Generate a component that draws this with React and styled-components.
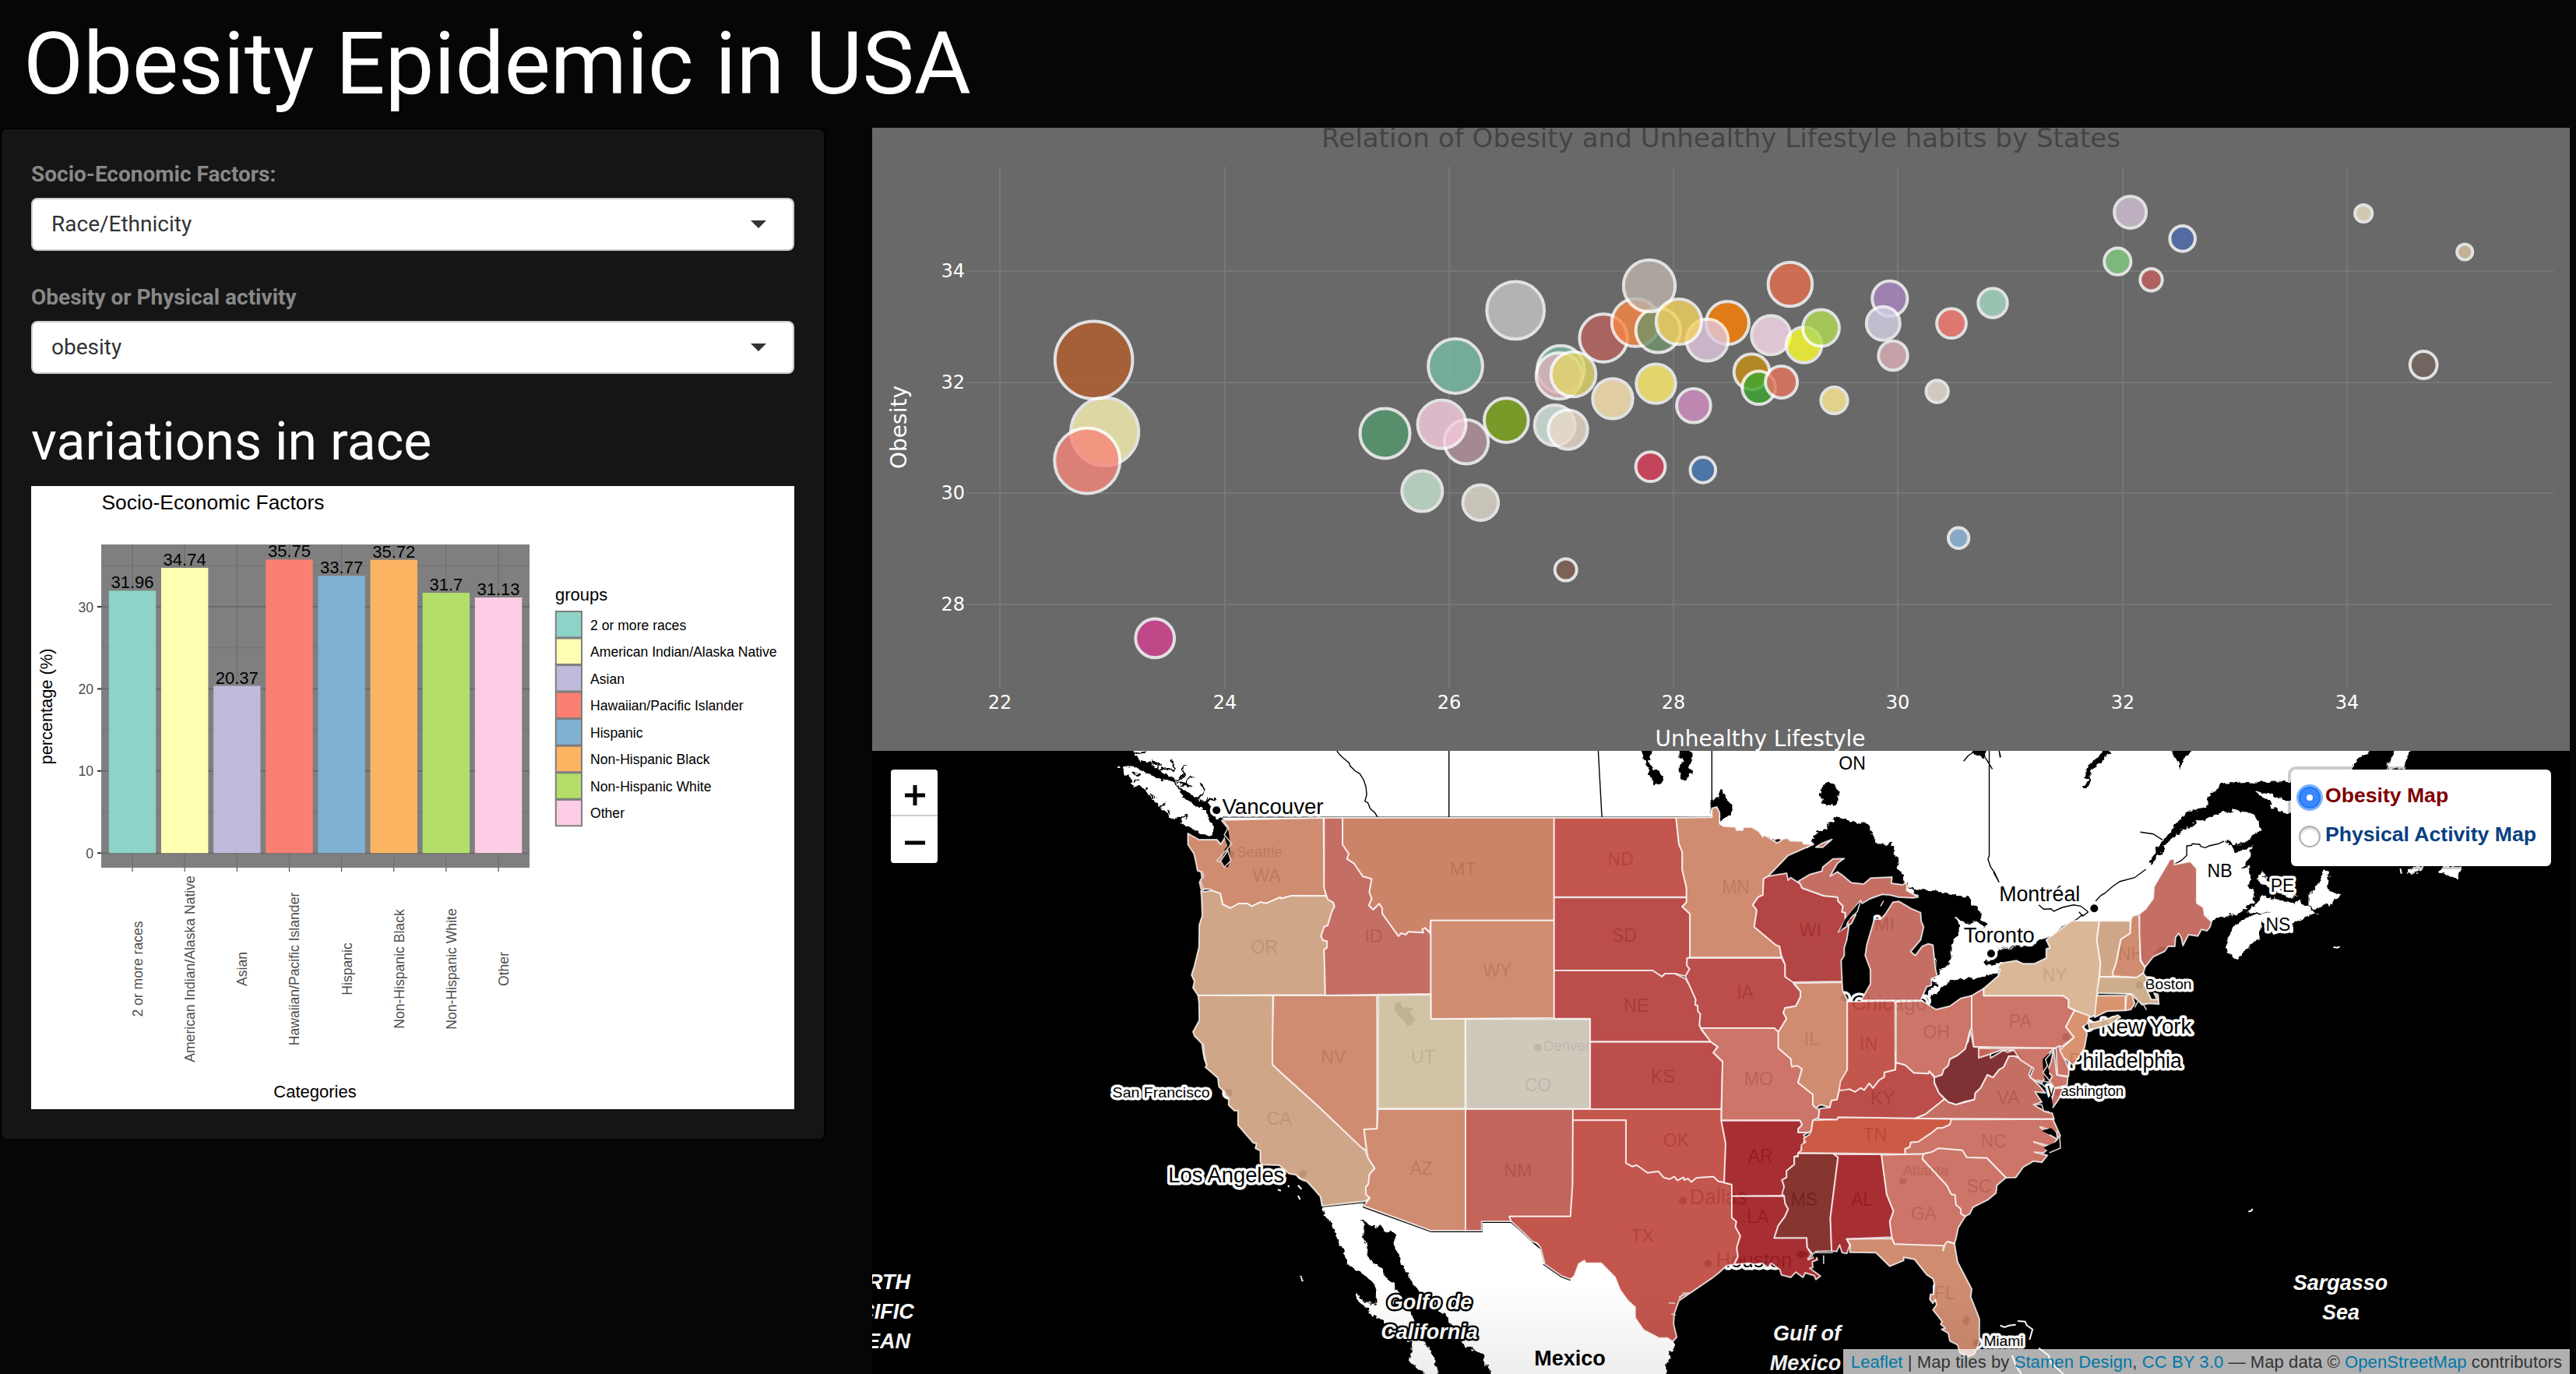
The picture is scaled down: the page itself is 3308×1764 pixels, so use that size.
import React from "react";
import styled, { createGlobalStyle } from "styled-components";

const GlobalStyle = createGlobalStyle`
  html, body { margin: 0; padding: 0; background: #060606; }
  body { font-family: Roboto, "Liberation Sans", sans-serif; font-size: 28px; line-height: 40px; color: #888; }
  * { box-sizing: border-box; }
`;

/* ---------- page shell ---------- */

const Page = styled.div`
  width: 3308px;
  height: 1764px;
  overflow: hidden;
  background: #060606;
`;

const PageHeader = styled.header`
  height: 164px;
  padding: 20px 30px 0;
`;

const PageTitle = styled.h1`
  margin: 0;
  font-size: 112px;
  font-weight: 400;
  line-height: 123px;
  letter-spacing: -0.1px;
  color: #fff;
`;

const Columns = styled.div`
  display: grid;
  grid-template-columns: 1060px 2180px;
  column-gap: 60px;
  align-items: start;
`;

const Well = styled.aside`
  height: 1300px;
  padding: 38px;
  border: 2px solid #020202;
  border-radius: 8px;
  background: #151515;
`;

const Field = styled.div`
  display: flex;
  flex-direction: column;
  gap: 10px;
  margin-bottom: 40px;
`;

const FieldLabel = styled.span`
  font-weight: 700;
  height: 40px;
`;

const SelectBox = styled.div`
  display: flex;
  align-items: center;
  justify-content: space-between;
  height: 68px;
  padding: 0 34px 0 24px;
  border: 2px solid #ccc;
  border-radius: 8px;
  background: #fff;
  color: #333;
`;

const Caret = styled.span`
  width: 0;
  height: 0;
  border: solid transparent;
  border-width: 10px 10px 0;
  border-top-color: #333;
`;

const SectionTitle = styled.h2`
  margin: 53px 0 21px;
  height: 70px;
  font-size: 68px;
  font-weight: 400;
  line-height: 68px;
  color: #fff;
`;

const Drawing = styled.svg`
  display: block;
  background: ${(p) => p.$ground};
  font-family: ${(p) => p.$font};
`;

const MainColumn = styled.main`
  display: flex;
  flex-direction: column;
`;

const ARIAL = '"Liberation Sans", Arial, sans-serif';
const VERDANA = '"DejaVu Sans", Verdana, sans-serif';

/* Recovers a paint colour from how it looks when laid over a ground at the given alpha. */
function solve(hex, ground, alpha) {
  const n = parseInt(hex, 16);
  const ch = [(n >> 16) & 255, (n >> 8) & 255, n & 255].map((c) =>
    Math.max(0, Math.min(255, Math.round((c - ground * (1 - alpha)) / alpha)))
  );
  return `rgb(${ch.join(",")})`;
}

/* ---------- bar chart ---------- */

const GROUPS = [
  ["2 or more races", 31.96, "#8dd3c7"],
  ["American Indian/Alaska Native", 34.74, "#ffffb3"],
  ["Asian", 20.37, "#bebada"],
  ["Hawaiian/Pacific Islander", 35.75, "#fb8072"],
  ["Hispanic", 33.77, "#80b1d3"],
  ["Non-Hispanic Black", 35.72, "#fdb462"],
  ["Non-Hispanic White", 31.7, "#b3de69"],
  ["Other", 31.13, "#fccde5"],
];

const barX = (i) => 130 + i * 67.15;
const barY = (v) => 471.2 - v * 10.54;

function BarChart() {
  return (
    <Drawing width="980" height="800" viewBox="0 0 980 800" $ground="#fff" $font={ARIAL}>
      <text x="90.5" y="30" fontSize="26.4" fill="#000">Socio-Economic Factors</text>
      <rect x="90" y="75" width="550" height="415" fill="#7f7f7f" />
      {[5, 15, 25, 35].map((v) => (
        <line key={v} x1="90" x2="640" y1={barY(v)} y2={barY(v)} stroke="#737373" strokeWidth="1" />
      ))}
      {[0, 10, 20, 30].map((v) => (
        <g key={v}>
          <line x1="90" x2="640" y1={barY(v)} y2={barY(v)} stroke="#6b6b6b" strokeWidth="2" />
          <line x1="85" x2="90" y1={barY(v)} y2={barY(v)} stroke="#333" strokeWidth="2" />
          <text x="80" y={barY(v) + 6.5} fontSize="17.6" textAnchor="end" fill="#4d4d4d">{v}</text>
        </g>
      ))}
      {GROUPS.map(([name, value, color], i) => (
        <g key={name}>
          <line x1={barX(i)} x2={barX(i)} y1="75" y2="490" stroke="#6b6b6b" strokeWidth="1" />
          <line x1={barX(i)} x2={barX(i)} y1="490" y2="495" stroke="#333" strokeWidth="1" />
          <rect x={barX(i) - 30.2} y={barY(value)} width="60.4" height={value * 10.54} fill={color} />
          <text x={barX(i)} y={barY(value) - 3} fontSize="22" textAnchor="middle" fill="#000">{value}</text>
          <text transform={`translate(${barX(i) + 13} 620) rotate(-90)`} fontSize="17.6" textAnchor="middle" fill="#4d4d4d">
            {name}
          </text>
          <rect x="673.8" y={161 + i * 34.55} width="33.2" height="33.4" fill={color} stroke="#7f7f7f" strokeWidth="2" />
          <text x="718" y={184.5 + i * 34.55} fontSize="17.6" fill="#000">{name}</text>
        </g>
      ))}
      <text x="673" y="147" fontSize="22" fill="#000">groups</text>
      <text x="364.5" y="785" fontSize="22" textAnchor="middle" fill="#000">Categories</text>
      <text transform="translate(26.5 283) rotate(-90)" fontSize="22" textAnchor="middle" textLength="149" fill="#000">
        percentage (%)
      </text>
    </Drawing>
  );
}

/* ---------- bubble plot ---------- */

/* x, y, radius, colour as seen on the plot ground */
const BUBBLES = [
  [1404.6, 462.2, 49.8, "a5603a"], [1418.7, 554.3, 43.5, "ddd7a3"], [1396.2, 591.4, 42, "db8077"],
  [1778.5, 556.4, 32, "578f6c"], [1869, 470, 34.9, "76ac97"], [1946.2, 398.4, 36.9, "b6b3b1"],
  [1883, 567.3, 28.2, "a48a93"], [1851.5, 544.8, 31, "dbb9c8"], [1934.3, 539.6, 28.3, "7a9a2a"],
  [1826.3, 630.6, 26, "b3cbbb"], [1901.3, 645.3, 22.8, "c8c3b7"], [2010.7, 731.6, 14, "7c6257"],
  [1483.2, 819.4, 24.9, "bf4989"], [2004.4, 474, 30.2, "79a797"], [2002.3, 482.6, 29.6, "c9a5ab"],
  [2020.5, 480.5, 28.8, "c7c069"], [1996.7, 545.9, 26, "bfcfc8"], [2013.5, 551.6, 25.2, "cfc3b6"],
  [2059.1, 434, 30.7, "a96561"], [2100.5, 414.1, 30.7, "dc824b"], [2129.3, 424, 28.6, "6f8b6a"],
  [2118, 367, 33.2, "aba59e"], [2218.4, 414.6, 27.5, "e07b17"], [2192.4, 436.6, 26.8, "cab6c7"],
  [2155.9, 413, 29.1, "d9bd62"], [2071, 511.9, 25.7, "e0cea4"], [2126.5, 492.6, 25.2, "e1d56c"],
  [2174.9, 520.8, 21.8, "be87b2"], [2119.5, 599.2, 18.9, "c4455c"], [2186.8, 603.4, 16.3, "4e76a5"],
  [2298.9, 365, 28.3, "cc6d53"], [2274.2, 430.3, 25, "dfc6d4"], [2316.6, 442.9, 22.8, "e1e23c"],
  [2338.5, 421, 23.4, "a4c457"], [2249.5, 477.4, 22.8, "b38824"], [2258.6, 497.8, 21.3, "469a3b"],
  [2287.6, 490.5, 20.5, "ce7161"], [2355.5, 514, 17.1, "e0d38a"], [2426.8, 383.3, 22.6, "9d80b0"],
  [2418.3, 415.2, 21.5, "bfbece"], [2431, 456.5, 18.7, "c3a2a7"], [2487.6, 502.5, 14.2, "d2c9bf"],
  [2506, 415.2, 18.9, "de7871"], [2559, 389, 18.7, "98c3b1"], [2515.1, 690.8, 13.2, "88aac6"],
  [2735.6, 272.4, 20.5, "bdafbf"], [2719.3, 335.7, 17.1, "7db77b"], [2802.7, 306.4, 16.3, "536ba2"],
  [2762.5, 359.2, 14.2, "b0625e"], [3035.2, 274, 11.1, "d2c9af"], [3165.2, 323.6, 10, "c3af93"],
  [3112.2, 468.5, 17.4, "70665f"],
];

const X_TICKS = [[22, 1284], [24, 1573], [26, 1861], [28, 2149], [30, 2437], [32, 2726], [34, 3014]];
const Y_TICKS = [[34, 348], [32, 491], [30, 633], [28, 776]];

function BubblePlot() {
  return (
    <Drawing width="2180" height="800" viewBox="1120 164 2180 800" $ground="#696969" $font={VERDANA}>
      <text x="2210" y="189" fontSize="34" textAnchor="middle" textLength="1026" fill="#444">
        Relation of Obesity and Unhealthy Lifestyle habits by States
      </text>
      {X_TICKS.map(([v, x]) => (
        <g key={v}>
          <line x1={x} x2={x} y1="214" y2="884" stroke="#777" strokeWidth="2" />
          <text x={x} y="910" fontSize="24" textAnchor="middle" fill="#fff">{v}</text>
        </g>
      ))}
      {Y_TICKS.map(([v, y]) => (
        <g key={v}>
          <line x1="1241" x2="3279" y1={y} y2={y} stroke="#777" strokeWidth="2" />
          <text x="1239" y={y + 8} fontSize="24" textAnchor="end" fill="#fff">{v}</text>
        </g>
      ))}
      {BUBBLES.map(([x, y, r, c]) => (
        <circle key={`${x}-${y}`} cx={x} cy={y} r={r} fill={solve(c, 105, 0.8)} stroke="#fff" strokeWidth="4" opacity="0.8" />
      ))}
      <text x="2260.5" y="958" fontSize="28" textAnchor="middle" fill="#fff">Unhealthy Lifestyle</text>
      <text transform="translate(1164 548.5) rotate(-90)" fontSize="28" textAnchor="middle" fill="#fff">Obesity</text>
    </Drawing>
  );
}

/* ---------- map ---------- */

/* The shapes are digitised on six sheets; each sheet has its own origin and horizontal scale. */
const SHEETS = {
  A: [1400, 950, 600 / 1568],
  B: [1980, 950, 620 / 1568],
  C: [2560, 950, 748 / 1568],
  D: [1110, 1340, 900 / 1568],
  E: [1980, 1340, 620 / 1568],
  F: [2560, 1340, 748 / 1568],
};

function place(sheet, x, y) {
  const [ox, oy, sx] = SHEETS[sheet];
  return [+(ox + x * sx).toFixed(1), +(oy + y / 3).toFixed(1)];
}

/* "A 10 20 30 40 B 5 6" -> svg path; a letter changes the sheet, "/" starts a new stroke. */
function trace(src, close) {
  const out = [];
  let sheet = "A";
  let pendingX = null;
  let start = true;
  src.split(/\s+/).forEach((t) => {
    if (SHEETS[t]) sheet = t;
    else if (t === "/") start = true;
    else if (pendingX === null) pendingX = Number(t);
    else {
      out.push((start ? "M" : "L") + place(sheet, pendingX, Number(t)).join(" "));
      pendingX = null;
      start = false;
    }
  });
  return out.join("") + (close ? "Z" : "");
}

const LAND = [
  // Canada with the Gaspé peninsula and New Brunswick
  "A 145 20 150 65 172 82 200 92 232 118 285 150 300 185 345 215 380 245 402 265 410 290 430 298 480 325 B 552 325 577 340 680 360 800 400 860 415 1000 500 1200 600 1290 900 1265 925 1250 1000 1480 930 C 18 890 152 850 220 715 375 715 380 685 405 670 430 665 545 640 587 700 600 685 622 684 640 675 665 665 690 635 704 625 700 590 688 560 690 520 685 490 668 492 692 455 688 430 703 402 690 415 652 436 648 415 640 405 620 390 640 398 665 400 680 390 700 365 718 350 716 315 700 290 685 280 660 270 620 278 560 310 510 345 465 400 440 455 408 502 420 490 424 460 450 400 470 365 486 325 520 280 545 268 575 262 577 220 590 200 612 168 650 165 700 160 730 165 790 162 870 165 962 158 965 105 985 62 1020 42 1020 20",
  // Vancouver Island
  "A 110 106 125 100 148 102 160 110 170 118 205 132 230 145 258 155 285 160 300 182 305 205 325 232 345 247 370 262 385 268 395 300 410 320 415 345 408 362 395 366 370 358 340 340 303 322 308 305 325 278 300 298 285 305 265 290 250 275 240 265 215 235 205 218 182 200 170 180 145 182 135 165 140 155 128 140 118 135",
  "C 704 204 712 198 728 201 760 220 803 236 803 285 775 276 755 262 740 235",
  "C 1075 55 1088 20 1125 20 1118 65 1105 90 1110 112 1055 112",
  "C 1112 512 1130 485 1158 485 1145 512",
  "C 1198 518 1212 485 1268 485 1255 510 1245 540 1228 520",
  "C 735 595 745 612 770 618 800 628 825 618 832 632 848 640 862 655 870 668 845 675 825 695 805 705 805 740 770 748 735 735 722 690 718 760 690 800 672 815 655 845 640 825 628 820 626 785 640 730 670 692 720 665 752 660 690 665 684 658 705 635 720 610",
  "C 890 500 905 515 900 560 902 580 932 598 905 638 885 640 870 650 848 640 848 600 870 560",
  "C 712 542 718 510 726 500 730 525 745 550 790 590 822 602 800 605 760 585 735 560",
  // Mexico
  "D 1024 627 1040 610 1125 590 1135 615 1268 700 1370 700 1381 670 1460 670 1480 722 1510 765 1528 790 1535 835 E 20 830 65 885 85 890 100 865 112 830 138 815 200 825 250 895 275 960 300 995 320 1020 320 1050 345 1090 390 1125 430 1135 430 1160 422 1190 412 1180 415 1210 403 1240 405 1290 D 1260 1290 1240 1250 1220 1225 1225 1190 1222 1150 1200 1138 1175 1110 1168 1075 1145 1050 1130 1038 1125 1015 1108 1000 1100 975 1102 958 1110 985 1130 1000 1145 1005 1147 940 1125 900 1105 872 1085 855 1078 830 1072 790 1060 770 1058 735 1045 705 1042 680 1030 660",
  "D 977 888 982 900 982 915 978 908",
];

const WATER = [
  "B 735 525 800 445 885 402 875 395 892 352 925 343 935 312 948 315 948 297 965 300 1010 318 1055 320 1063 335 1075 370 1090 400 1147 403 1142 440 1162 468 1153 500 1175 512 1170 540 1190 550 1185 575 1135 565 1068 545 1045 560 1010 555 960 520 940 535 900 520 832 550 795 520",
  "B 960 745 985 690 1010 655 1040 625 1075 610 1105 595 1130 590 1170 625 1140 660 1095 690 1075 710 1070 790 1080 940 1040 1010 1010 1012 985 1000 970 965 972 850 985 715",
  "B 1150 595 1222 600 1190 565 1230 580 1290 580 1345 598 1380 605 1395 635 1422 658 1425 685 1445 715 1435 722 1410 700 1375 702 1340 680 1355 720 1352 750 1330 790 1328 855 1310 875 1285 890 1270 800 1230 830 1190 825 1230 720 1220 680 1170 630",
  "B 1265 930 1288 935 1285 950 1255 952",
  "B 1280 1040 1255 1000 1285 970 1330 925 1360 917 1400 922 1440 902 1490 898 1492 915 1435 970 1396 990 1325 1030",
  "B 1437 862 1440 848 1475 845 1478 810 1568 792 C 0 805 60 793 115 793 120 772 150 755 160 762 150 800 150 850 110 870 80 865 62 855 18 864 0 868 B 1480 862 1460 870",
  "B 548 232 575 225 580 192 590 195 600 230 618 250 618 272 600 295 580 312 568 270 552 265 545 298 548 280",
  "B 325 30 357 30 357 60 345 92 380 120 395 150 385 168 365 174 355 165 355 140 340 100 338 80 330 75",
  "B 448 30 485 30 490 65 480 100 490 128 476 130 472 150 450 150 446 128 448 100 455 78 446 62",
  "B 910 175 925 170 930 160 948 162 955 185 965 195 960 235 958 252 945 258 930 248 905 240 912 225 902 212",
  "C 290 52 298 35 318 42 300 70 280 98 260 115 262 155 258 172 245 190 240 184 258 150 245 150 255 95",
  "C 480 30 527 30 530 58 515 70 508 90 503 118 498 85 484 65",
  "B 1395 48 1402 30 1445 30 1440 68 1420 58",
  // Gulf of California
  "D 1108 672 1125 690 1150 710 1155 698 1165 722 1187 730 1185 780 1195 810 1202 850 1215 880 1218 910 1240 950 1270 1010 1285 1030 1308 1055 1315 1090 1335 1110 1340 1160 1385 1200 1388 1240 1412 1290 1285 1290 1280 1235 1268 1190 1250 1140 1240 1100 1225 1050 1205 1000 1200 965 1185 945 1185 920 1168 905 1165 880 1140 845 1125 815 1122 770 1115 740 1118 700",
  // British Columbia inlets
  "A 145 62 172 82 200 92 232 118 285 150 300 180 320 200 345 222 380 240 400 245 405 258 398 290 385 270 345 250 325 236 303 208 300 186 280 160 258 156 230 146 200 132 170 118 158 104",
];

const INLETS =
  "A 150 50 165 52 185 45 / 180 85 215 92 240 95 / 205 82 225 90 228 112 / 232 118 250 110 280 120 278 95 275 78 / 240 105 262 112 / 285 152 300 150 318 130 310 112 322 95 / 295 162 318 168 330 150 348 142 / 305 175 322 170 340 182 / 345 218 362 225 380 200 382 180 372 172 / 365 232 392 240 405 222 420 238 / 380 245 398 225 / 140 128 155 128 165 130 / 145 165 160 150 / 180 200 190 180 / 215 225 210 205 / 240 262 250 240 / 265 288 262 268 / 322 308 325 280";

const BORDERS =
  "A 828 42 836 55 848 68 870 90 872 100 890 120 905 130 918 155 925 180 928 210 922 236 932 242 940 265 955 280 965 298 / A 1204 42 1204 298 / B 183 42 195 298 / B 552 42 552 263 / B 1453 42 1453 445 1449 460 1458 490 1470 510 1485 548 / B 1370 82 1385 60 1405 45 / B 1440 68 1463 112 / B 1485 42 1490 66 / C 15 42 18 68 / C 0 510 15 548 / C 487 478 505 465 520 445 520 408 533 406 535 400 555 402 558 410 570 415 580 408 605 400 620 390 / C 395 355 430 362 455 385 / C 122 635 135 652 155 650 162 660 185 645 215 635 235 640 255 662 240 678 230 662 / C 115 780 160 755 185 720 225 690 240 672 / C 275 620 290 598 300 590 320 565 340 545 380 530 410 498";

const ISLETS =
  "A 92 104 100 105 / D 970 545 978 560 / D 970 585 975 600 / D 948 545 950 552 / D 925 562 932 566 / F 18 1085 30 1092 42 1085 60 1082 / F 65 1068 85 1070 90 1085 105 1100 97 1140 / F 122 1172 148 1200 155 1230 188 1272 / F 50 1200 60 1240 75 1272 / C 915 798 925 800 932 796 / F 686 646 692 645 698 637 / C 1095 495 1098 515";

/* name, colour over white, outline */
const STATES = [
  ["WA", "cf8c71", "A 328 360 365 384 425 384 438 402 448 385 462 350 462 335 443 308 783 300 785 570 792 601 675 600 640 611 638 606 592 629 570 625 543 641 527 630 498 630 471 648 444 633 440 605 437 592 420 586 408 582 405 575 372 573 367 548 375 530 372 508 360 503 355 470 348 438 328 403"],
  ["OR", "cfa688", "A 372 580 385 585 408 580 437 592 444 633 471 648 498 630 527 630 543 641 570 625 592 629 638 606 640 611 675 600 792 601 797 614 815 625 820 640 810 665 797 715 785 720 775 755 780 770 795 775 795 800 785 808 789 982 362 984 345 955 350 930 340 905 350 870 365 798 366 712 376 678 374 610"],
  ["CA", "cfa688", "A 362 984 613 984 613 1248 D 913 80 930 108 1015 240 1120 410 1127 440 1142 480 1130 503 1128 540 1122 552 1122 580 1131 594 1120 607 1024 625 1020 588 1005 558 990 530 980 525 965 505 950 500 928 468 890 466 886 455 886 412 875 403 877 384 870 382 836 314 836 258 828 258 815 236 815 210 805 185 793 165 791 132 763 90 766 80 759 45 755 0 A 390 1250 382 1225 380 1175 350 1140 345 1124 366 1080 365 1010"],
  ["NV", "cf8c71", "A 615 984 962 984 D 1147 0 1147 328 1118 330 1124 412 1112 400 1015 240 930 108 913 80 913 0"],
  ["ID", "c46e64", "A 785 300 847 300 847 403 868 438 862 458 885 475 915 525 945 535 937 585 945 612 935 637 950 653 970 630 980 648 980 668 1034 755 1043 744 1060 749 1067 738 1118 742 1114 730 1123 723 1143 748 1143 978 789 984 785 808 795 800 795 775 780 770 775 755 785 720 797 715 810 665 820 640 815 625 797 614 785 570"],
  ["MT", "cc8468", "A 847 300 1557 300 1557 695 1143 695 1140 740 1123 723 1114 730 1118 742 1067 738 1060 749 1043 744 1034 755 980 668 980 648 970 630 950 653 935 637 945 612 937 585 945 535 915 525 885 475 862 458 868 438 847 403"],
  ["WY", "cf8c71", "A 1143 695 1557 695 1557 1070 1143 1075"],
  ["UT", "d1c3a4", "A 966 984 1143 980 1143 1075 1259 1075 D 1344 250 1149 250"],
  ["CO", "cfc9bc", "A 1259 1075 B 157 1075 E 157 251 D 1346 251"],
  ["AZ", "cf8c71", "D 1149 252 1345 252 1345 720 1268 720 1117 625 1131 594 1122 580 1122 552 1128 540 1130 503 1142 480 1127 440 1124 412 1118 330 1147 328"],
  ["NM", "c3655b", "D 1345 252 E 101 252 100 540 93 665 D 1443 665 1447 684 1381 684 1381 720 1345 720"],
  ["ND", "c3564d", "B 40 300 436 300 445 400 456 432 456 500 470 570 470 605 40 605"],
  ["SD", "bb4e4a", "B 40 607 470 607 470 625 456 642 481 670 481 838 472 840 471 868 480 882 466 910 432 900 400 900 390 912 360 888 40 888"],
  ["NE", "bb4e4a", "B 40 888 360 888 390 912 400 900 432 900 466 920 480 945 500 1000 498 1020 506 1022 507 1045 515 1055 512 1098 520 1120 550 1162 157 1162 157 1073 40 1073"],
  ["KS", "bb4e4a", "B 157 1163 550 1163 570 1182 557 1205 587 1240 E 583 252 157 252"],
  ["OK", "c3564d", "E 101 252 583 252 583 296 597 385 592 535 573 530 557 512 502 517 485 533 475 520 462 525 460 515 440 527 430 512 415 522 395 515 378 492 343 497 308 468 293 473 273 460 273 295 101 295"],
  ["TX", "c3564d", "E 101 295 273 295 273 460 293 473 308 468 343 497 378 492 395 515 415 522 430 512 440 527 460 515 462 525 475 520 485 533 502 517 557 512 573 530 592 535 617 542 617 670 632 685 629 705 645 740 633 785 637 820 625 850 600 855 575 882 550 905 445 990 430 1040 428 1080 438 1130 425 1147 408 1133 380 1133 330 1102 303 1055 303 1015 280 990 255 950 238 900 193 845 143 845 138 835 120 848 105 895 93 907 65 895 10 850 D 1523 850 1513 785 1505 768 1495 762 1465 712 1447 684 1443 665 E 93 665 100 540"],
  ["MN", "cf8c71", "B 436 300 552 298 552 263 568 258 577 280 577 322 590 332 630 335 632 347 652 347 655 336 682 336 705 352 718 373 722 366 765 397 785 380 800 378 805 388 847 390 850 400 882 402 800 445 735 525 720 535 718 598 703 605 685 635 698 655 690 720 760 790 772 795 778 838 481 838 481 670 456 642 470 625 470 570 456 500 456 432 445 400"],
  ["IA", "bb4e4a", "B 472 840 778 840 790 865 790 912 815 930 820 942 840 968 840 990 825 1025 790 1032 784 1050 795 1073 768 1125 755 1110 517 1110 512 1098 515 1055 507 1045 506 1022 498 1020 500 1000 466 910 480 882 471 868"],
  ["MO", "cc7568", "B 517 1110 755 1110 768 1125 768 1187 810 1230 E 808 58 812 88 830 82 845 97 832 150 880 195 880 235 900 255 900 270 898 285 880 295 875 335 865 342 832 342 832 328 845 312 838 295 583 294 587 68 557 34 572 12 B 548 1162 535 1140"],
  ["AR", "a72f34", "E 583 296 838 296 845 312 832 328 832 342 865 342 850 352 858 365 850 378 857 390 843 400 843 410 832 430 820 435 820 465 795 490 795 515 780 525 787 550 787 585 617 587 617 542 592 535 597 385"],
  ["LA", "a72f34", "E 617 587 787 587 790 615 800 637 790 665 768 700 755 748 860 748 862 785 875 810 865 832 890 818 895 832 878 840 880 862 870 865 905 895 890 908 885 893 855 882 848 900 825 880 808 900 778 890 773 870 745 845 735 862 715 845 690 850 675 845 625 850 637 820 633 785 645 740 629 705 632 685 617 670"],
  ["MS", "873530", "E 832 422 950 422 962 437 937 670 941 798 890 800 880 812 862 785 860 748 755 748 768 700 790 665 800 637 790 615 787 585 780 580 787 550 780 525 795 515 795 490 820 465 820 435 832 435"],
  ["AL", "a72f34", "E 948 426 1103 426 1120 580 1142 645 1130 685 1137 745 990 752 1000 775 990 808 975 805 967 775 958 800 941 798 937 670 962 437"],
  ["GA", "cc7568", "E 1103 428 1240 424 1236 443 1315 545 1330 580 1342 582 1345 620 1360 635 1362 655 1375 665 1362 690 1352 710 1345 750 1340 770 1318 762 1308 780 1145 772 1137 747 1130 685 1142 645 1120 580"],
  ["FL", "cf8c71", "E 990 752 1137 750 1145 772 1305 778 1303 797 1310 770 1318 762 1340 770 1350 840 1396 945 1393 975 1421 1060 1421 1150 1405 1195 1385 1205 1358 1190 1350 1160 1325 1145 1320 1115 1298 1100 1310 1095 1295 1080 1300 1070 1270 1025 1282 1005 1278 985 1270 1000 1260 985 1262 965 1272 965 1275 925 1270 905 1250 890 1210 830 1175 823 1175 835 1130 857 1085 805 1000 803 1002 775"],
  ["TN", "cc5b46", "E 890 294 958 292 962 283 1213 287 1333 290 1325 312 1300 325 1285 325 1270 340 1222 378 1198 380 1195 398 1180 405 1180 425 832 420 843 410 843 390 857 378 850 365 868 350 875 335 880 295"],
  ["KY", "bb4e4a", "E 898 290 902 250 935 245 940 218 958 215 965 180 985 172 1000 175 1017 185 1035 170 1047 178 1063 152 1075 170 1095 140 1112 128 1112 110 1148 100 1150 72 1180 82 1208 112 1255 115 1258 105 1275 130 1275 152 1290 190 1308 213 1245 272 1213 287 962 283 958 292"],
  ["IL", "cf8c71", "B 820 937 975 933 977 965 992 1000 E 992 100 965 180 958 215 940 218 935 245 905 235 890 248 880 235 880 195 832 150 845 97 830 85 812 88 808 58 B 810 1230 768 1187 768 1125 795 1073 784 1050 790 1032 825 1025 840 990 840 968"],
  ["IN", "c3564d", "B 992 1008 1147 1005 E 1148 100 1112 110 1112 128 1095 140 1075 170 1063 152 1047 178 1035 170 1017 185 1000 175 985 178 965 180 970 145 992 100"],
  ["OH", "cc7568", "B 1150 1008 1235 1005 1280 1038 1325 1025 1360 995 1396 985 1396 1105 1388 1130 E 1380 0 1375 20 1350 45 1325 60 1320 85 1305 100 1300 120 1278 130 1258 105 1255 115 1208 112 1180 82 1150 72"],
  ["WI", "b34544", "B 720 535 735 525 795 513 800 540 808 530 840 555 845 570 915 600 960 605 962 620 978 640 975 662 985 665 985 695 963 740 998 712 990 770 982 800 982 830 972 850 975 930 815 933 790 912 790 865 778 830 772 795 760 790 690 720 698 655 685 635 703 605 718 598"],
  ["MI", "c46e64", "B 832 545 870 518 910 505 912 490 945 458 982 457 960 475 936 525 960 508 975 520 1005 550 1045 555 1068 532 1137 528 1135 552 1172 558 1185 548 1185 580 1222 605 1205 608 1158 605 1130 597 1105 595 1065 612 1040 630 1035 618 1010 655 988 690 985 665 975 662 978 640 962 620 960 605 915 600 845 570 840 555"],
  ["MI-lower", "c46e64", "B 1140 625 1160 622 1200 650 1230 665 1232 698 1240 720 1230 770 1198 815 1213 830 1235 795 1255 785 1270 790 1278 880 1284 910 1265 920 1265 945 1250 950 1230 1003 1037 1003 1067 940 1067 885 1050 830 1055 790 1080 690 1100 690 1115 672"],
  ["MI-isle", "c46e64", "B 890 413 910 398 942 383 912 413"],
  ["WI-door", "b34544", "B 990 712 1000 680 1020 672 1005 708"],
  ["PA", "cc7568", "B 1396 985 1435 957 1435 985 C 0 985 187 985 202 1000 202 1030 218 1042 195 1105 217 1145 185 1180 170 1187 B 1402 1182 1396 1105"],
  ["NY", "d9b797", "B 1435 985 1435 957 C 12 910 18 885 10 880 18 860 62 850 80 862 110 862 142 840 142 805 152 800 142 770 165 745 210 697 285 697 278 770 285 830 288 860 275 1060 256 1070 218 1040 202 1030 202 1000 187 985"],
  ["NY-island", "d9b797", "C 258 1115 255 1090 275 1085 305 1075 335 1060 342 1068 310 1098 272 1112"],
  ["VT", "cfa688", "C 285 697 368 697 368 745 343 768 330 860 320 900 327 912 285 912 288 860 278 770"],
  ["NH", "cf8c71", "C 370 690 375 678 388 672 393 690 395 850 408 875 403 900 385 915 325 910 320 900 330 860 343 768 368 745"],
  ["ME", "c46e64", "C 393 670 410 650 430 610 432 565 475 460 487 458 487 480 530 468 547 495 547 628 565 645 568 675 587 700 583 720 575 735 560 730 550 755 525 750 510 792 505 760 498 745 490 760 488 795 470 795 460 815 430 835 408 875 397 850 393 750"],
  ["MA", "cfae8e", "C 285 912 385 915 403 898 415 920 405 940 412 960 425 1000 440 1000 432 975 443 980 445 1018 420 1015 400 1020 372 978 278 975"],
  ["CT", "d9936f", "C 278 985 355 985 355 1042 305 1045 272 1068"],
  ["RI", "d9936f", "C 358 982 372 980 380 1015 370 1038 355 1042"],
  ["NJ", "d9936f", "C 218 1042 258 1062 254 1090 240 1105 252 1130 245 1185 215 1253 178 1212 178 1195 217 1145 195 1105"],
  ["WV", "803134", "E 1457 18 1457 55 1500 25 1512 33 1537 22 1555 40 1557 58 1535 48 1517 48 1500 90 1485 100 1465 130 1447 120 1425 170 1408 190 1405 215 1375 222 1345 235 1320 225 1290 190 1275 150 1275 130 1300 120 1305 100 1320 85 1325 60 1350 45 1375 20 1380 0 B 1385 1160 1392 1120 1402 1182 1457 1187"],
  ["VA", "c46e64", "E 1213 287 1245 272 1308 213 1320 225 1345 235 1405 215 1408 190 1425 170 1447 120 1465 130 1485 100 1500 90 1517 48 1535 48 1557 58 F 80 65 105 85 95 120 125 165 140 190 112 185 130 225 108 235 140 262 158 268 163 290"],
  ["VA-shore", "c46e64", "F 165 172 188 170 175 215 160 245 155 225"],
  ["MD", "cc7568", "F -40 17 165 17 150 35 138 65 145 85 135 110 140 130 128 155 98 130 108 95 72 62 55 25 20 25 0 35 -40 55"],
  ["MD-shore", "cc7568", "F 162 20 170 120 200 128 198 160 165 170 150 145 158 125 145 105 155 70"],
  ["DE", "cc7568", "F 168 15 178 8 180 30 195 70 203 100 202 125 172 120"],
  ["NC", "cc7568", "E 1330 292 F 160 290 180 355 172 365 170 340 125 320 150 350 172 368 155 395 108 378 150 400 135 420 110 418 145 430 130 457 108 452 80 475 60 515 32 516 E 1507 516 1445 440 1380 438 1365 410 1288 403 1265 418 1240 424 1180 425 1180 405 1195 398 1198 380 1222 378 1270 340 1285 325 1300 325 1325 312"],
  ["SC", "cc7568", "E 1240 424 1265 418 1288 403 1365 410 1380 438 1445 440 1507 516 1478 545 1475 575 1450 600 1400 630 1390 655 1375 665 1362 655 1360 635 1345 620 1342 582 1330 580 1315 545 1236 443"],
];

/* water inside or in front of the states */
const SOUNDS = [
  "A 410 315 428 310 445 325 462 340 470 395 462 410 455 390 448 360 440 385 425 350",
  "A 452 420 468 400 470 465 462 490 448 488 440 465",
  "B 985 690 1012 650 1035 620 1038 632 1005 680 965 742",
  "E 880 812 900 802 940 800 942 808 905 810 885 828",
  "F 132 60 150 35 145 80 150 110 140 150 135 120",
  "F 135 235 155 195 160 240 150 262",
  "F 130 335 155 325 168 340 150 350",
  "F 135 400 165 380 180 370 180 402 150 418",
];

const SOUND_EDGES =
  "A 462 340 450 365 475 400 460 420 425 465 435 470 462 425 472 465 450 490 440 470 / A 440 310 465 345 / A 375 505 382 525 370 540 380 570 / A 372 580 395 572 / F 160 28 140 60 145 85 133 110 155 150 120 140 145 175 / F 178 355 180 402 150 420 / F 108 235 130 235 135 260 150 262 / E 890 805 945 805 / E 915 815 915 848 / E 445 985 460 960 480 960 445 975 / E 435 1045 420 1040 / E 432 1000 412 998 / E 862 828 880 815 / C 372 985 390 1005 380 1030 / C 400 1010 412 1040 / B 1035 620 1025 660 1000 690 / B 1110 620 1100 640 / B 1148 1020 1148 1200";

const RIVERS = [
  "A 1022 1015 1040 1008 1048 1030 1082 1032 1082 1042 1070 1045 1090 1075 1080 1095 1065 1102 1055 1085 1035 1062 1022 1040",
  "E 1377 1045 1390 1058 1390 1072 1377 1086 1364 1068",
  "E 825 812 838 797 865 805 862 818 840 826",
  "C 430 825 450 795 480 800 470 810",
];

/* sheet, x, baseline, label */
const STATE_NAMES = [
  ["A", 592, 545, "WA"], ["A", 1251, 523, "MT"], ["A", 584, 823, "OR"], ["A", 951, 781, "ID"], ["A", 1366, 911, "WY"],
  ["A", 816, 1244, "NV"], ["A", 1117, 1244, "UT"], ["D", 1507, 184, "CO"], ["D", 928, 311, "CA"], ["D", 1246, 505, "AZ"],
  ["D", 1462, 513, "NM"], ["B", 256, 482, "ND"], ["B", 268, 776, "SD"], ["B", 306, 1048, "NE"], ["B", 630, 590, "MN"],
  ["B", 872, 757, "WI"], ["B", 660, 997, "IA"], ["B", 876, 1175, "IL"], ["B", 1061, 1193, "IN"], ["B", 1113, 735, "MI"],
  ["B", 1281, 1148, "OH"], ["E", 393, 150, "KS"], ["E", 704, 158, "MO"], ["E", 1107, 233, "KY"], ["E", 436, 396, "OK"],
  ["E", 1082, 374, "TN"], ["E", 710, 455, "AR"], ["E", 852, 623, "MS"], ["E", 1040, 623, "AL"], ["E", 701, 689, "LA"],
  ["E", 327, 765, "TX"], ["E", 1240, 678, "GA"], ["E", 1420, 572, "SC"], ["E", 1467, 400, "NC"], ["E", 1515, 230, "VA"],
  ["E", 1308, 984, "FL"], ["C", 72, 1106, "PA"], ["C", 165, 930, "NY"], ["C", 370, 848, "NH"],
  ["B", 1008, 115, "ON"], ["C", 609, 527, "NB"], ["C", 778, 585, "PE"], ["C", 766, 735, "NS"],
];

const CITIES = [
  ["A", 443, 285, "Vancouver", 27, 130], ["A", 491, 451, "Seattle", 19, 59], ["B", 5, 1196, "Denver", 19, 60],
  ["B", 1005, 1042, "Chicago", 27, 97], ["C", 15, 620, "Montréal", 27, 104], ["B", 1370, 779, "Toronto", 27, 91],
  ["C", 408, 959, "Boston", 19, 60], ["C", 288, 1130, "New York", 27, 117], ["F", 203, 94, "Philadelphia", 27, 145],
  ["F", 145, 202, "Washington", 19, 98], ["D", 555, 206, "San Francisco", 19, 125], ["D", 680, 535, "Los Angeles", 27, 149],
  ["E", 480, 619, "Dallas", 27, 74], ["E", 565, 860, "Houston", 27, 98], ["E", 1172, 507, "Atlanta", 19, 59],
  ["E", 1435, 1165, "Miami", 19, 51],
];

const DOTS = [
  ["A", 424, 271], ["A", 472, 440], ["D", 815, 190], ["D", 981, 500], ["A", 1502, 1185], ["E", 458, 605], ["E", 540, 847],
  ["E", 1172, 528], ["B", 983, 993], ["E", 1412, 1153], ["C", 271, 649], ["B", 1459, 823], ["C", 393, 945], ["C", 255, 1100],
  ["F", 195, -25], ["B", 1243, 1005],
];

const SEAS = [
  ["D", 103, 945, "NORTH", "end"], ["D", 111, 1058, "PACIFIC", "end"], ["D", 103, 1172, "OCEAN", "end"],
  ["D", 1264, 1023, "Golfo de", "middle"], ["D", 1264, 1137, "California", "middle"],
  ["E", 861, 1143, "Gulf of", "middle"], ["E", 856, 1258, "Mexico", "middle"],
  ["F", 934, 947, "Sargasso", "middle"], ["F", 935, 1062, "Sea", "middle"],
];

const MapFrame = styled.section`
  position: relative;
  height: 800px;
  overflow: hidden;
  font-family: ${ARIAL};
`;

const ZoomControl = styled.div`
  position: absolute;
  top: 24px;
  left: 24px;
  width: 60px;
  border-radius: 4px;
  background: #fff;
  overflow: hidden;
`;

const ZoomButton = styled.div`
  display: flex;
  align-items: center;
  justify-content: center;
  height: 60px;
  padding-top: 8px;
  padding-left: 2px;
  border-bottom: ${(p) => (p.$divided ? "2px solid #ccc" : "0")};
`;

const LayerControl = styled.div`
  position: absolute;
  top: 20px;
  right: 20px;
  width: 342px;
  height: 132px;
  padding: 19px 10px 0 10px;
  border: 4px solid rgba(0, 0, 0, 0.2);
  border-radius: 10px;
  background: #fff;
  background-clip: padding-box;
`;

const LayerOption = styled.div`
  display: flex;
  align-items: center;
  gap: 6px;
  height: 50px;
  margin-top: ${(p) => (p.$first ? "-8px" : "0")};
  font-size: 26.6px;
  font-weight: 700;
  line-height: 30px;
  color: ${(p) => p.$color};
`;

const LayerName = styled.span`
  margin-bottom: 6px;
  white-space: nowrap;
`;

const Radio = styled.span`
  display: flex;
  align-items: center;
  justify-content: center;
  width: 28px;
  height: 28px;
  border-radius: 50%;
  background: ${(p) => (p.$on ? "#3b88fd" : "#fff")};
  border: 2px solid ${(p) => (p.$on ? "#1f78f6" : "#b0b0b0")};
  box-shadow: ${(p) => (p.$on ? "0 0 0 3px #7db1f7" : "inset 0 2px 3px rgba(0,0,0,.2)")};

  &::after {
    content: "";
    width: 8px;
    height: 8px;
    border-radius: 50%;
    background: #fff;
  }
`;

const Attribution = styled.div`
  position: absolute;
  right: 0;
  bottom: 0;
  height: 32px;
  padding: 0 10px;
  background: rgba(255, 255, 255, 0.69);
  color: #333;
  font-size: 22px;
  letter-spacing: 0.1px;
  line-height: 33px;
  white-space: nowrap;
`;

const Credit = styled.span`
  color: #0078a8;
`;

function MapLabel({ sheet, x, y, size = 23, anchor = "start", width, children }) {
  const [px, py] = place(sheet, x, y);
  return (
    <text
      x={px} y={py} fontSize={size} textAnchor={anchor} textLength={width} lengthAdjust="spacingAndGlyphs"
      fill="#000" stroke="#fff" strokeWidth="7" strokeLinejoin="round" paintOrder="stroke"
    >
      {children}
    </text>
  );
}

function StateMap() {
  return (
    <Drawing width="2180" height="800" viewBox="1120 964 2180 800" $ground="#000" $font={ARIAL}>
      <defs>
        <linearGradient id="foot" x1="0" y1="0" x2="0" y2="1">
          <stop offset="0" stopColor="#000" stopOpacity="0" />
          <stop offset="1" stopColor="#000" stopOpacity="0.07" />
        </linearGradient>
        <filter id="coast" x="0" y="0" width="100%" height="100%">
          <feTurbulence type="fractalNoise" baseFrequency="0.12" numOctaves="3" seed="4" />
          <feDisplacementMap in="SourceGraphic" scale="9" xChannelSelector="R" yChannelSelector="G" />
        </filter>
      </defs>
      <g filter="url(#coast)">
        {LAND.map((d) => <path key={d} d={trace(d, true)} fill="#fff" />)}
        {WATER.map((d) => <path key={d} d={trace(d, true)} fill="#000" />)}
        <path d={trace(INLETS)} fill="none" stroke="#000" strokeWidth="2" />
      </g>
      <path d={trace("A 443 297 1568 297 B 0 297 552 297")} fill="none" stroke="#888" strokeWidth="2" />
      <path d={trace(BORDERS)} fill="none" stroke="#000" strokeWidth="1.4" />
      <path d={trace(ISLETS)} fill="none" stroke="#fff" strokeWidth="2" />
      {STATES.map(([n, , d]) => <path key={n} d={trace(d, true)} fill="#fff" />)}
      {RIVERS.map((d) => <path key={d} d={trace(d, true)} fill="#000" />)}
      <path d={trace("D 1024 627 1120 610 1117 629 1268 723 1381 723 1381 687 1447 687 1467 716 1497 766 1514 790 1524 853 E 10 853 65 898 93 910")} fill="none" stroke="#000" strokeWidth="2" />
      {DOTS.map(([s, x, y]) => {
        const [cx, cy] = place(s, x, y);
        return <circle key={`${s}${x}`} cx={cx} cy={cy} r="5" fill="#000" stroke="#fff" strokeWidth="7" paintOrder="stroke" />;
      })}
      {STATE_NAMES.map(([s, x, y, t]) => (
        <MapLabel key={t} sheet={s} x={x} y={y} anchor="middle">{t}</MapLabel>
      ))}
      {CITIES.map(([s, x, y, t, size, w]) => (
        <MapLabel key={t} sheet={s} x={x} y={y} size={size} width={w}>{t}</MapLabel>
      ))}
      {STATES.map(([n, c, d]) => (
        <path
          key={n} d={trace(d, true)} fill={solve(c, 255, 0.93)} fillOpacity="0.93"
          stroke="#fff" strokeOpacity="0.75" strokeWidth="2" strokeLinejoin="round"
        />
      ))}
      {SOUNDS.map((d) => <path key={d} d={trace(d, true)} fill="#000" />)}
      <path d={trace(SOUND_EDGES)} fill="none" stroke="#d8d0cc" strokeWidth="1.6" />
      {SEAS.map(([s, x, y, t, anchor]) => {
        const [px, py] = place(s, x, y);
        return (
          <text
            key={t} x={px} y={py} fontSize="27" fontWeight="700" fontStyle="italic" textAnchor={anchor}
            fill="#fff" stroke="#000" strokeWidth="5" strokeLinejoin="round" paintOrder="stroke"
          >
            {t}
          </text>
        );
      })}
      <text x="2016" y="1752.7" fontSize="27" fontWeight="700" textAnchor="middle" fill="#000">Mexico</text>
      <rect x="1120" y="1650" width="2180" height="114" fill="url(#foot)" />
    </Drawing>
  );
}

function Sign({ plus }) {
  return (
    <svg width="26" height="26" viewBox="0 0 26 26">
      <path d={plus ? "M0 13H26M13 0V26" : "M0 13H26"} stroke="#000" strokeWidth="5" />
    </svg>
  );
}

function Select({ label, value }) {
  return (
    <Field>
      <FieldLabel>{label}</FieldLabel>
      <SelectBox>
        {value}
        <Caret />
      </SelectBox>
    </Field>
  );
}

export default function App() {
  return (
    <Page>
      <GlobalStyle />
      <PageHeader>
        <PageTitle>Obesity Epidemic in USA</PageTitle>
      </PageHeader>
      <Columns>
        <Well>
          <Select label="Socio-Economic Factors:" value="Race/Ethnicity" />
          <Select label="Obesity or Physical activity" value="obesity" />
          <SectionTitle>variations in race</SectionTitle>
          <BarChart />
        </Well>
        <MainColumn>
          <BubblePlot />
          <MapFrame>
            <StateMap />
            <ZoomControl>
              <ZoomButton $divided><Sign plus /></ZoomButton>
              <ZoomButton><Sign /></ZoomButton>
            </ZoomControl>
            <LayerControl>
              <LayerOption $first $color="#7f0000">
                <Radio $on />
                <LayerName>Obesity Map</LayerName>
              </LayerOption>
              <LayerOption $color="#084081">
                <Radio />
                <LayerName>Physical Activity Map</LayerName>
              </LayerOption>
            </LayerControl>
            <Attribution>
              <Credit>Leaflet</Credit> | Map tiles by <Credit>Stamen Design</Credit>, <Credit>CC BY 3.0</Credit> — Map data ©{" "}
              <Credit>OpenStreetMap</Credit> contributors
            </Attribution>
          </MapFrame>
        </MainColumn>
      </Columns>
    </Page>
  );
}
